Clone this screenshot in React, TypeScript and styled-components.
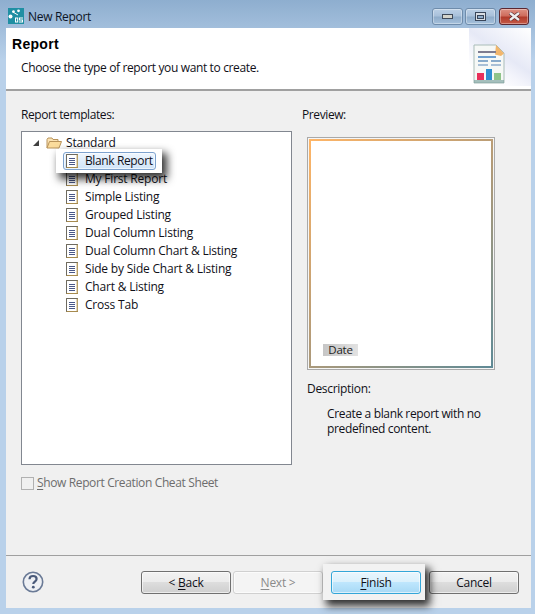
import React from "react";
import styled, { createGlobalStyle } from "styled-components";

const GlobalStyle = createGlobalStyle`
  html, body {
    margin: 0;
    padding: 0;
    background: #b9d1ea;
  }
  * {
    box-sizing: border-box;
  }
`;

const WindowFrame = styled.div`
  width: 535px;
  height: 614px;
  display: flex;
  flex-direction: column;
  padding: 0 4px 6px 6px;
  background: linear-gradient(180deg, #8eaecf 0, #b9d1ea 60px);
  font-family: "Open Sans", "Noto Sans", sans-serif;
  font-size: 12px;
  color: #101018;
  overflow: hidden;
`;

const TitleBar = styled.div`
  height: 28px;
  flex: none;
  display: flex;
  align-items: flex-start;
  padding: 8px 2px 0 2px;
`;

const TitleText = styled.span`
  margin-left: 4px;
  line-height: 18px;
  letter-spacing: -0.3px;
  color: #0c1526;
  flex: 1;
`;

const CaptionButton = styled.div<{ $close?: boolean }>`
  width: ${(p) => (p.$close ? 30 : 31)}px;
  height: 17px;
  margin-left: ${(p) => (p.$close ? 3 : 2)}px;
  display: flex;
  align-items: center;
  justify-content: center;
  border-radius: 3px;
  border: 1px solid ${(p) => (p.$close ? "#5b2730" : "#6f8cab")};
  background: ${(p) =>
    p.$close
      ? "linear-gradient(180deg, #dd9184 0, #cf6d5d 45%, #b23c2c 55%, #c45a47 100%)"
      : "linear-gradient(180deg, #bcd0e6 0, #a9c1db 45%, #8facca 55%, #a6c1dc 100%)"};
  box-shadow: inset 0 0 0 1px rgba(255, 255, 255, 0.35);
`;

const Client = styled.div`
  flex: 1;
  min-height: 0;
  display: flex;
  flex-direction: column;
  background: #f0f0f0;
`;

const Banner = styled.div`
  height: 63px;
  flex: none;
  display: flex;
  justify-content: space-between;
  background: #fff;
  border-bottom: 2px solid #a0a0a0;
  padding: 7px 0 3px 6px;
`;

const BannerText = styled.div`
  display: flex;
  flex-direction: column;
`;

const BannerTitle = styled.div`
  font-family: "Liberation Sans", sans-serif;
  font-size: 14px;
  font-weight: 700;
  letter-spacing: 0.3px;
  line-height: 18px;
  color: #000;
`;

const BannerHint = styled.div`
  margin: 7px 0 0 9px;
  line-height: 16px;
  letter-spacing: -0.36px;
`;

const BannerArt = styled.div`
  width: 62px;
  height: 58px;
  margin-top: -7px;
  padding: 16px 0 0 4px;
  background: linear-gradient(215deg, #fff 0, #e6e9f6 45%, #f3f4fb 60%, #fff 80%);
`;

const Body = styled.div`
  flex: 1;
  min-height: 0;
  display: grid;
  grid-template-columns: 271px 200px;
  column-gap: 16px;
  padding: 16px 0 0 15px;
`;

const LeftColumn = styled.div`
  display: flex;
  flex-direction: column;
`;

const RightColumn = styled.div`
  display: flex;
  flex-direction: column;
  margin-left: -6px;
`;

const FieldLabel = styled.div`
  line-height: 16px;
  letter-spacing: -0.4px;
`;

const TreeBox = styled.div`
  margin-top: 8px;
  height: 334px;
  background: #fff;
  border: 1px solid #828790;
  padding: 2px 0 0 10px;
`;

const TreeRow = styled.div<{ $indent?: number }>`
  height: 18px;
  display: flex;
  align-items: center;
  gap: 7px;
  margin-left: ${(p) => p.$indent ?? 0}px;
  line-height: 18px;
  letter-spacing: -0.2px;
  white-space: nowrap;
  position: relative;
`;

const ExpandArrow = styled.svg`
  width: 8px;
  height: 8px;
  margin-right: -1px;
`;

const FolderSvg = styled.svg`
  width: 16px;
  height: 12px;
  margin-right: -3px;
`;

const SelectedRow = styled(TreeRow)`
  z-index: 1;
  width: 93px;
  margin-left: 31px;
  padding-left: 2px;
  letter-spacing: -0.38px;
  border: 1px solid transparent;

  &::before {
    content: "";
    position: absolute;
    left: -8px;
    top: -4px;
    width: 106px;
    height: 24px;
    background: #fff;
    box-shadow: 4px 5px 8px 1px rgba(0, 0, 0, 0.8);
    z-index: -1;
  }

  &::after {
    content: "";
    position: absolute;
    inset: -1px;
    border: 1px solid #7da2ce;
    border-radius: 3px;
    background: linear-gradient(180deg, #eef6fe 0, #d0e4f8 100%);
    box-shadow: inset 0 0 0 1px rgba(255, 255, 255, 0.6);
    z-index: -1;
  }
`;

const CheckRow = styled.div`
  margin-top: 10px;
  display: flex;
  align-items: center;
  gap: 3px;
  color: #6d6d6d;
  letter-spacing: -0.37px;
  line-height: 16px;
`;

const CheckBox = styled.div`
  width: 13px;
  height: 13px;
  border: 1px solid #b1b1b1;
  background: #f0f0f0;
`;

const Mnemonic = styled.span`
  text-decoration: underline;
  text-underline-offset: 2px;
`;

const PreviewFrame = styled.div`
  margin: 14px 0 0 5px;
  height: 233px;
  width: 188px;
  border: 1px solid #a9a9a9;
  padding: 1px;
  background: #f6f6f6;
`;

const PreviewCanvas = styled.div`
  height: 100%;
  display: flex;
  align-items: flex-end;
  padding: 0 0 10px 12px;
  background:
    linear-gradient(#fff, #fff) padding-box,
    linear-gradient(135deg, #ffb566 0, #b39b78 50%, #5f8a96 100%) border-box;
  border: 2px solid transparent;
`;

const DateTag = styled.div`
  width: 35px;
  height: 12px;
  line-height: 12px;
  font-size: 11.5px;
  text-align: center;
  letter-spacing: -0.2px;
  background: linear-gradient(90deg, #c6c6c6 0, #e2e2e2 100%);
  color: #222;
`;

const DescriptionLabel = styled(FieldLabel)`
  margin: 11px 0 0 5px;
  letter-spacing: -0.3px;
`;

const DescriptionText = styled.div`
  margin: 9px 0 0 25px;
  width: 165px;
  line-height: 15px;
  letter-spacing: -0.35px;
`;

const Footer = styled.div`
  height: 53px;
  flex: none;
  border-top: 1px solid #a0a0a0;
  display: flex;
  align-items: flex-start;
  padding: 15px 0 0 16px;
`;

const HelpIcon = styled.svg`
  width: 22px;
  height: 22px;
  margin-right: 97px;
`;

const PushButton = styled.div<{ $disabled?: boolean; $default?: boolean }>`
  width: 90px;
  height: 23px;
  margin-right: 2px;
  display: flex;
  align-items: center;
  justify-content: center;
  border-radius: 3px;
  letter-spacing: -0.25px;
  line-height: 20px;
  position: relative;
  border: 1px solid
    ${(p) => (p.$disabled ? "#d0d0d0" : p.$default ? "#33a6d8" : "#707070")};
  color: ${(p) => (p.$disabled ? "#8a8a8a" : "#101018")};
  background: ${(p) =>
    p.$disabled
      ? "#f4f4f4"
      : p.$default
        ? "linear-gradient(180deg, #eaf6fd 0, #d9f0fc 50%, #bee6fd 50%, #a7d9f5 100%)"
        : "linear-gradient(180deg, #f2f2f2 0, #ebebeb 50%, #dddddd 50%, #cfcfcf 100%)"};
  box-shadow: inset 0 0 0 1px rgba(255, 255, 255, 0.6);
`;

const FinishCallout = styled.div`
  margin: 0 8px 0 6px;
  position: relative;
  z-index: 1;

  &::before {
    content: "";
    position: absolute;
    left: -8px;
    top: -7px;
    width: 102px;
    height: 36px;
    background: #f2f2f2;
    box-shadow: 4px 5px 8px 1px rgba(0, 0, 0, 0.8);
    z-index: -1;
  }
`;

const FlatButton = styled(PushButton)`
  margin-right: 0;
`;

function TitleIcon() {
  return (
    <svg width="16" height="16" viewBox="0 0 16 16">
      <rect width="16" height="16" fill="#1f8fa3" />
      <path d="M4 3.5L10 7" stroke="#fff" strokeWidth="1" />
      <circle cx="10.5" cy="2.8" r="1.4" fill="#fff" />
      <circle cx="5.5" cy="3.5" r="1.3" fill="#fff" />
      <circle cx="2.5" cy="8.5" r="2" fill="#fff" />
      <path d="M7 9.5h3.2v5H7zM8 10.5v3h1.2v-3zM11 9.5h4v1h-3v1h3v3h-4v-1h3v-1h-3z" fill="#fff" fillRule="evenodd" />
    </svg>
  );
}

function MinimizeGlyph() {
  return (
    <svg width="11" height="5" viewBox="0 0 11 5">
      <rect x="0.5" y="0.5" width="10" height="4" fill="#d4d4cc" stroke="#3f4a5a" />
    </svg>
  );
}

function MaximizeGlyph() {
  return (
    <svg width="11" height="9" viewBox="0 0 11 9">
      <rect x="0.5" y="0.5" width="10" height="8" fill="#d8dde4" stroke="#39465a" />
      <rect x="2.5" y="3.5" width="6" height="3" fill="#8facca" stroke="#39465a" />
    </svg>
  );
}

function CloseGlyph() {
  return (
    <svg width="13" height="9" viewBox="0 0 13 9">
      <path d="M2 1l9 7M11 1l-9 7" stroke="#4c2227" strokeWidth="3.6" />
      <path d="M2 1l9 7M11 1l-9 7" stroke="#eee" strokeWidth="2.4" />
    </svg>
  );
}

function ReportArt() {
  return (
    <svg width="32" height="40" viewBox="0 0 32 40">
      <path d="M1 1h22l8 8v30H1z" fill="#f6f8f6" stroke="#a9bcb8" />
      <path d="M1 36h30v3H1z" fill="#6f9a96" opacity="0.6" />
      <path d="M23 1l8 8.5-3 2.5-6-1.5z" fill="#f2b66c" />
      <rect x="5" y="7" width="18" height="2" fill="#7e7c90" />
      <rect x="5" y="12" width="18" height="2" fill="#6f9fd0" />
      <rect x="5" y="16" width="10" height="2" fill="#88aacb" />
      <rect x="18" y="16" width="10" height="2" fill="#88aacb" />
      <rect x="5" y="20" width="10" height="2" fill="#a8bfd6" />
      <rect x="18" y="20" width="10" height="2" fill="#a8bfd6" />
      <rect x="4" y="29" width="7" height="7" fill="#e8305a" />
      <rect x="13" y="25" width="6" height="11" fill="#2f8fd0" />
      <rect x="21" y="29" width="7" height="7" fill="#8fc48a" />
    </svg>
  );
}

function OpenFolderIcon() {
  return (
    <FolderSvg viewBox="0 0 16 12">
      <path d="M1 11V2.5L2 1h4l1 1.5h5v2" fill="#fbe3b4" stroke="#b8935a" />
      <path d="M1 11l2.5-6.5h12L13 11z" fill="#fbdc9c" stroke="#b8935a" />
    </FolderSvg>
  );
}

function ReportLeafIcon() {
  return (
    <svg width="12" height="14" viewBox="0 0 12 14" style={{ flex: "none" }}>
      <rect x="0.5" y="0.5" width="11" height="13" fill="#fff" stroke="#a68a4e" />
      <path d="M0.5 0.5v13M0.5 0.5h11" stroke="#6d6a60" />
      <path d="M11 1v12" stroke="#c9b07a" />
      <path d="M3 4.5h6M3 6.5h6M3 8.5h6M3 10.5h6" stroke="#4a5888" />
    </svg>
  );
}

const LEAF_REPORTS = [
  "My First Report",
  "Simple Listing",
  "Grouped Listing",
  "Dual Column Listing",
  "Dual Column Chart & Listing",
  "Side by Side Chart & Listing",
  "Chart & Listing",
  "Cross Tab",
];

export default function App() {
  return (
    <>
      <GlobalStyle />
      <WindowFrame>
        <TitleBar>
          <TitleIcon />
          <TitleText>New Report</TitleText>
          <CaptionButton>
            <MinimizeGlyph />
          </CaptionButton>
          <CaptionButton>
            <MaximizeGlyph />
          </CaptionButton>
          <CaptionButton $close>
            <CloseGlyph />
          </CaptionButton>
        </TitleBar>
        <Client>
          <Banner>
            <BannerText>
              <BannerTitle>Report</BannerTitle>
              <BannerHint>Choose the type of report you want to create.</BannerHint>
            </BannerText>
            <BannerArt>
              <ReportArt />
            </BannerArt>
          </Banner>
          <Body>
            <LeftColumn>
              <FieldLabel>Report templates:</FieldLabel>
              <TreeBox>
                <TreeRow>
                  <ExpandArrow viewBox="0 0 8 8">
                    <path d="M7 1v6H1z" fill="#404040" />
                  </ExpandArrow>
                  <OpenFolderIcon />
                  Standard
                </TreeRow>
                <SelectedRow>
                  <ReportLeafIcon />
                  Blank Report
                </SelectedRow>
                {LEAF_REPORTS.map((name) => (
                  <TreeRow key={name} $indent={34}>
                    <ReportLeafIcon />
                    {name}
                  </TreeRow>
                ))}
              </TreeBox>
              <CheckRow>
                <CheckBox />
                <span>
                  <Mnemonic>S</Mnemonic>how Report Creation Cheat Sheet
                </span>
              </CheckRow>
            </LeftColumn>
            <RightColumn>
              <FieldLabel>Preview:</FieldLabel>
              <PreviewFrame>
                <PreviewCanvas>
                  <DateTag>Date</DateTag>
                </PreviewCanvas>
              </PreviewFrame>
              <DescriptionLabel>Description:</DescriptionLabel>
              <DescriptionText>
                Create a blank report with no predefined content.
              </DescriptionText>
            </RightColumn>
          </Body>
          <Footer>
            <HelpIcon viewBox="0 0 22 22">
              <circle cx="11" cy="11" r="9.7" fill="#eef0f4" stroke="#6a7a96" strokeWidth="1.6" />
              <path
                d="M7.5 8.2c0-2 1.6-3.2 3.6-3.2s3.5 1.1 3.5 3c0 2.6-3.3 2.6-3.3 5"
                fill="none"
                stroke="#4a5a7a"
                strokeWidth="2.2"
              />
              <circle cx="11.3" cy="16.2" r="1.4" fill="#4a5a7a" />
            </HelpIcon>
            <PushButton>
              &lt;&nbsp;<Mnemonic>B</Mnemonic>ack
            </PushButton>
            <PushButton $disabled>
              <Mnemonic>N</Mnemonic>ext &gt;
            </PushButton>
            <FinishCallout>
              <FlatButton $default>
                <Mnemonic>F</Mnemonic>inish
              </FlatButton>
            </FinishCallout>
            <FlatButton>Cancel</FlatButton>
          </Footer>
        </Client>
      </WindowFrame>
    </>
  );
}
